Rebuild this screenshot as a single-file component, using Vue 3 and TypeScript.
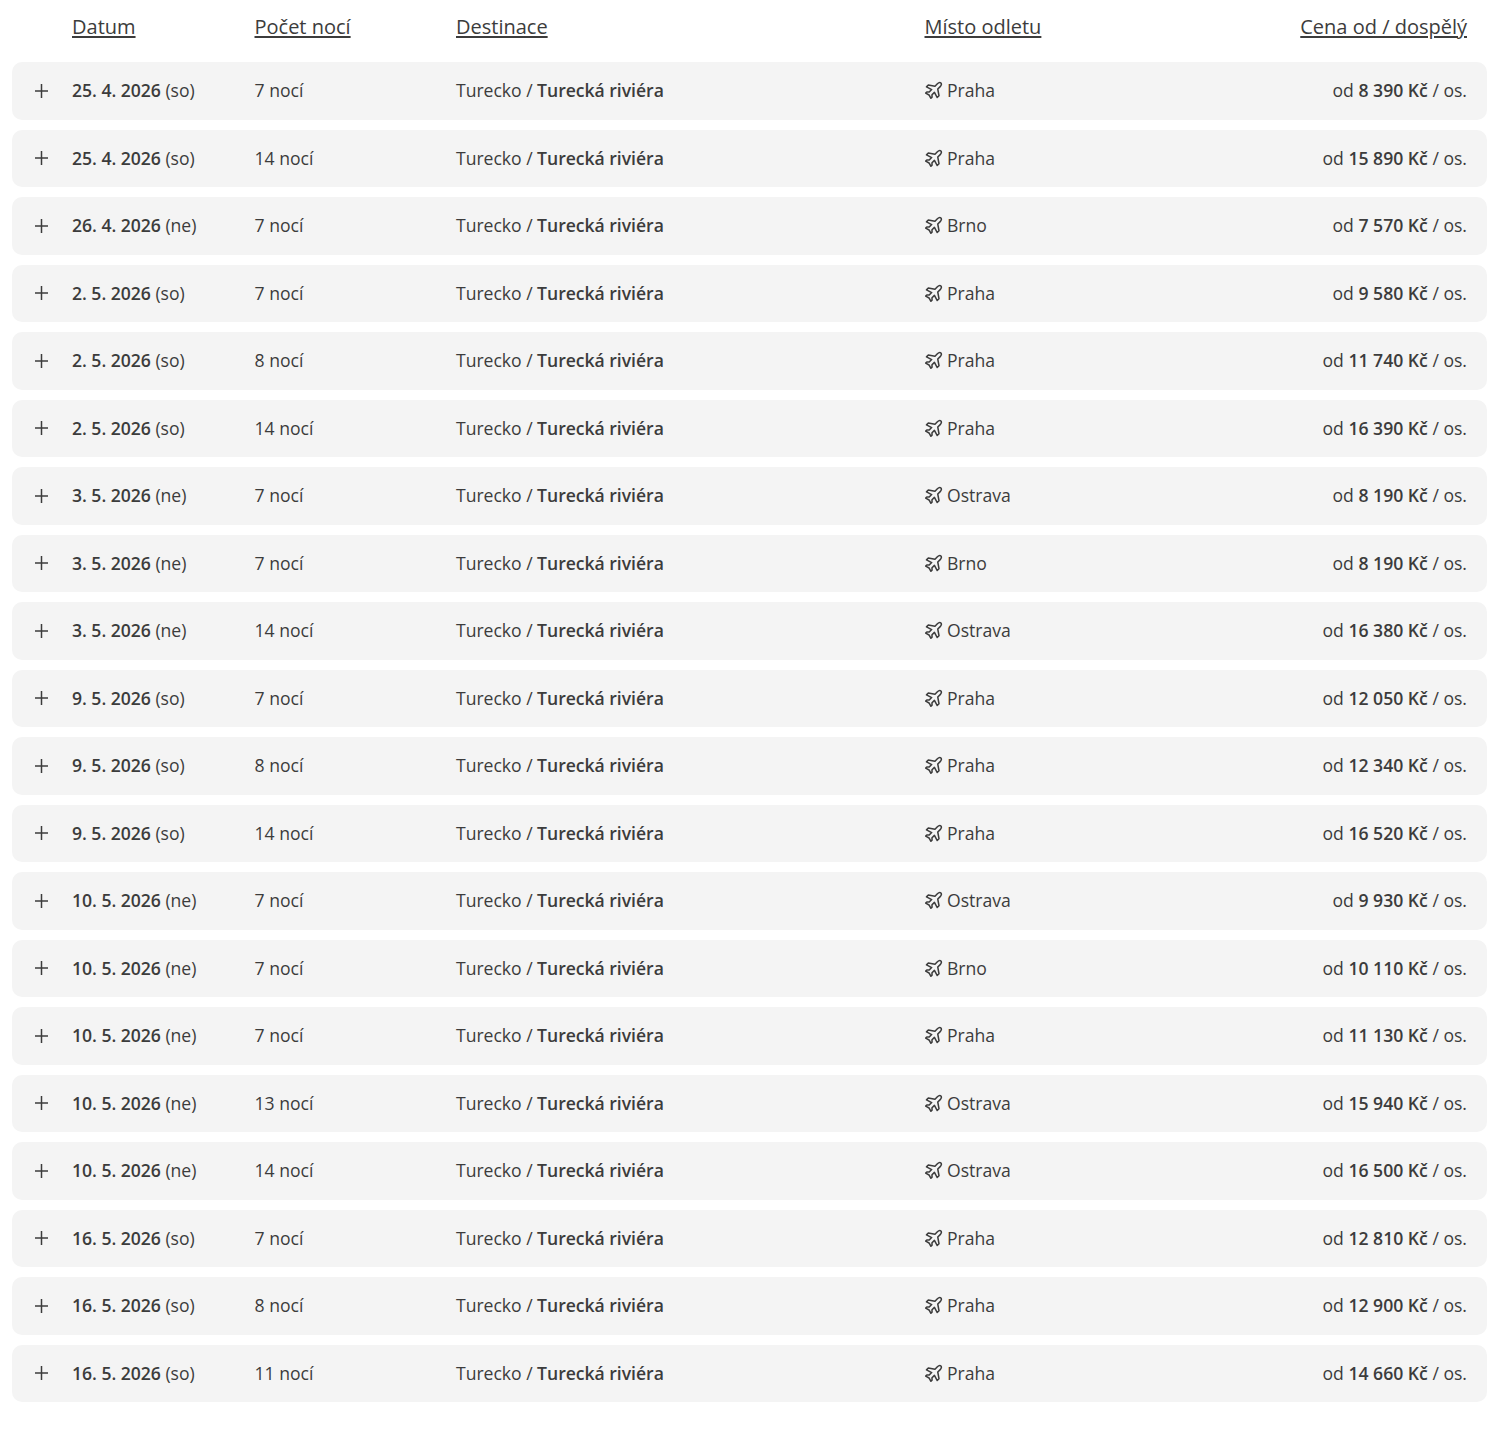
<script setup lang="ts">
interface Row { date: string; day: string; nights: string; from: string; price: string }
const raw = [
  '25. 4. 2026|so|7|Praha|8 390',
  '25. 4. 2026|so|14|Praha|15 890',
  '26. 4. 2026|ne|7|Brno|7 570',
  '2. 5. 2026|so|7|Praha|9 580',
  '2. 5. 2026|so|8|Praha|11 740',
  '2. 5. 2026|so|14|Praha|16 390',
  '3. 5. 2026|ne|7|Ostrava|8 190',
  '3. 5. 2026|ne|7|Brno|8 190',
  '3. 5. 2026|ne|14|Ostrava|16 380',
  '9. 5. 2026|so|7|Praha|12 050',
  '9. 5. 2026|so|8|Praha|12 340',
  '9. 5. 2026|so|14|Praha|16 520',
  '10. 5. 2026|ne|7|Ostrava|9 930',
  '10. 5. 2026|ne|7|Brno|10 110',
  '10. 5. 2026|ne|7|Praha|11 130',
  '10. 5. 2026|ne|13|Ostrava|15 940',
  '10. 5. 2026|ne|14|Ostrava|16 500',
  '16. 5. 2026|so|7|Praha|12 810',
  '16. 5. 2026|so|8|Praha|12 900',
  '16. 5. 2026|so|11|Praha|14 660',
]
const rows: Row[] = raw.map((s) => {
  const [date, day, nights, from, price] = s.split('|')
  return { date, day, nights, from, price }
})
</script>

<template>
  <div class="page">
    <div class="grid head">
      <span></span>
      <a>Datum</a>
      <a>Počet nocí</a>
      <a>Destinace</a>
      <a>Místo odletu</a>
      <a class="right">Cena od / dospělý</a>
    </div>
    <div class="list">
      <div v-for="(r, i) in rows" :key="i" class="grid row">
        <svg class="plus" width="13" height="14" viewBox="0 0 13 14" aria-hidden="true">
          <path d="M6.500 0v14M0 7h13" fill="none" stroke="#3c3c3c" stroke-width="1.5" />
        </svg>
        <span class="date"><b>{{ r.date }}</b> ({{ r.day }})</span>
        <span>{{ r.nights }} nocí</span>
        <span class="dest">Turecko / <b>Turecká riviéra</b></span>
        <span class="from">
          <svg class="plane" width="18" height="18" viewBox="-10.500 -10.500 21 21" aria-hidden="true">
            <path transform="translate(.3 -.3) rotate(45)" d="M0-11C1.600-11 2.300-9 2.300-7.500V-3.500L8.800 1V4L2.300 2V6L4.300 8V9.800L0 8.600-4.300 9.800V8L-2.300 6V2L-8.800 4V1L-2.300-3.500V-7.500C-2.300-9-1.600-11 0-11Z" fill="none" stroke="#3c3c3c" stroke-width="1.800" stroke-linejoin="round" />
          </svg>
          {{ r.from }}
        </span>
        <span class="right">od <b>{{ r.price }} Kč</b> / os.</span>
      </div>
    </div>
  </div>
</template>

<style scoped>
.page {
  margin: 0 16px 0 12px;
  padding-bottom: 27px;
  font-family: "Open Sans", sans-serif;
  font-size: 17.6px;
  line-height: 27px;
  color: #3c3c3c;
}
.grid {
  display: grid;
  grid-template-columns: 60px 182.5px 201.5px 468.5px 1fr auto;
  align-items: center;
}
.head {
  height: 62px;
  padding: 0 20px 10px 0;
  box-sizing: border-box;
  font-size: 20px;
}
.head a {
  text-decoration: underline;
  text-underline-offset: 2px;
}
.list {
  display: flex;
  flex-direction: column;
  gap: 10px;
}
.row {
  height: 57.5px;
  padding-right: 20px;
  background: #f4f4f4;
  border-radius: 10px;
}
.row b {
  font-weight: 600;
}
.date,
.dest {
  letter-spacing: -0.03px;
}
.plus {
  justify-self: start;
  margin-left: 23px;
}
.from {
  display: flex;
  align-items: center;
  gap: 4px;
}
.plane {
  margin-left: 0.5px;
  margin-top: -1px;
}
.right {
  text-align: right;
  white-space: nowrap;
}
</style>
